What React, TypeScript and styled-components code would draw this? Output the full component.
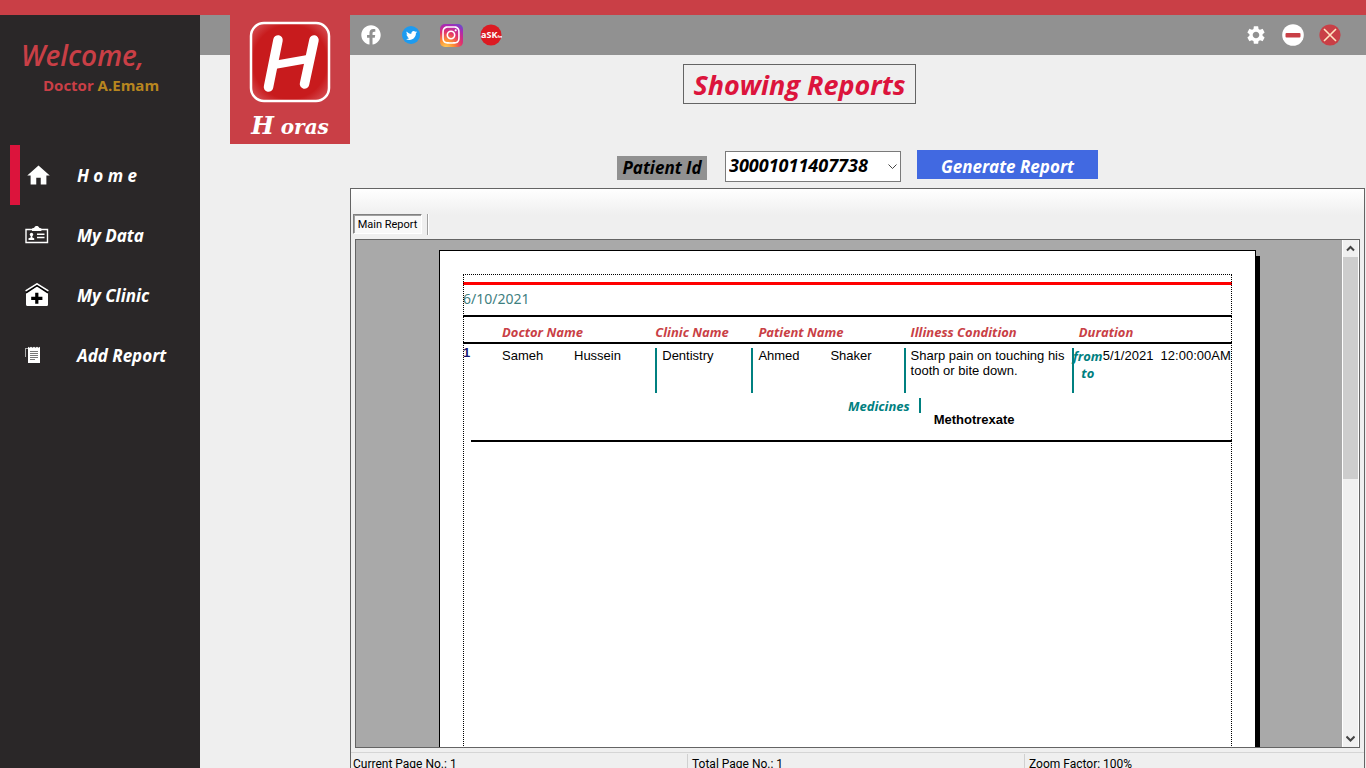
import React from "react";
import styled, { createGlobalStyle } from "styled-components";
import { FaFacebook, FaTwitter, FaInstagram } from "react-icons/fa";
import { MdHome, MdSettings } from "react-icons/md";

const brand = "#c93f46";
const hand = `"Comic Sans MS", "Open Sans", sans-serif`;
const ui = `Tahoma, Roboto, sans-serif`;

const GlobalStyle = createGlobalStyle`
  * { box-sizing: border-box; }
  body { margin: 0; background: #efefef; }
  button { border: 0; padding: 0; background: none; font: inherit; color: inherit; cursor: pointer; }
  svg { display: block; flex: none; }
`;

const Page = styled.div`
  display: flex;
  flex-direction: column;
  height: 100vh;
  overflow: hidden;
  font-family: ${hand};
`;

const TopStripe = styled.div`
  flex: none;
  height: 15px;
  background: ${brand};
`;

const Body = styled.div`
  flex: 1;
  min-height: 0;
  display: flex;
`;

const Sidebar = styled.aside`
  flex: none;
  width: 200px;
  background: #2a2728;
`;

const Greeting = styled.div`
  height: 130px;
  padding: 22px 0 0 21px;
  color: ${brand};
`;

const Welcome = styled.div`
  font-size: 28px;
  line-height: 36px;
  font-style: italic;
  font-weight: 600;
`;

const UserName = styled.div`
  padding-left: 22px;
  font-size: 15px;
  line-height: 24px;
  font-weight: 700;

  span { color: #b8861f; }
`;

const MenuItem = styled.button<{ $active?: boolean }>`
  display: flex;
  align-items: center;
  width: 190px;
  height: 60px;
  margin-left: 10px;
  border-left: 10px solid ${(p) => (p.$active ? "#dc143c" : "transparent")};
  color: #fff;
  font-size: 17px;
  font-style: italic;
  font-weight: 700;
`;

const MenuIcon = styled.span`
  width: 57px;
  padding-left: 5px;
`;

const Main = styled.main`
  flex: 1;
  min-width: 0;
  display: flex;
  flex-direction: column;
  background: #efefef;
`;

const Header = styled.header`
  flex: none;
  display: flex;
  align-items: flex-start;
  height: 40px;
  padding: 0 18px 0 30px;
  background: #919191;
`;

const LogoCard = styled.div`
  flex: none;
  display: flex;
  flex-direction: column;
  align-items: center;
  width: 120px;
  height: 129px;
  padding-top: 6px;
  background: ${brand};
`;

const LogoName = styled.div`
  margin-top: 5px;
  color: #fff;
  font: italic 700 20px/36px "DejaVu Serif", serif;

  b { font-size: 24px; }
`;

const IconRow = styled.div<{ $cell: number }>`
  display: grid;
  grid-auto-flow: column;
  grid-auto-columns: ${(p) => p.$cell}px;
  align-items: center;
  justify-items: center;
  height: 40px;
  margin-left: 1px;
  color: #fff;
`;

const Spacer = styled.div`
  flex: 1;
`;

const Disc = styled.span`
  display: grid;
  place-items: center;
  width: 18px;
  height: 18px;
  border-radius: 50%;
  background: #1d9bf0;
`;

const InstaTile = styled.span`
  display: grid;
  place-items: center;
  width: 23px;
  height: 23px;
  border-radius: 5px;
  background: radial-gradient(circle at 25% 105%, #ffd25a 0, #fd8d32 28%, #e1306c 55%, #a92bb5 78%, #4c5bd4 100%);
`;

const Content = styled.section`
  flex: 1;
  min-height: 0;
  display: flex;
  flex-direction: column;
  padding: 9px 1px 0 150px;
`;

const TitleRow = styled.div`
  display: flex;
  justify-content: center;
  padding-right: 116px;
`;

const Title = styled.h1`
  width: 233px;
  height: 40px;
  margin: 0;
  border: 1px solid #646464;
  color: #dc143c;
  font-size: 27px;
  line-height: 40px;
  font-style: italic;
  text-align: center;
  white-space: nowrap;
`;

const Form = styled.form`
  display: flex;
  align-items: center;
  justify-content: center;
  height: 38px;
  margin: 43px 0 3px;
  font-size: 17px;
  font-style: italic;
  font-weight: 700;
`;

const FieldLabel = styled.label`
  width: 90px;
  height: 24px;
  margin: 4px 18px 0 0;
  background: #919191;
  line-height: 24px;
  text-align: center;
`;

const SelectBox = styled.div`
  display: grid;
  align-items: center;
  width: 176px;
  height: 31px;
  margin-right: 16px;

  > * { grid-area: 1 / 1; }
  svg { justify-self: end; margin-right: 4px; pointer-events: none; }
`;

const Select = styled.select`
  appearance: none;
  width: 100%;
  height: 100%;
  padding: 0 20px 2px 3px;
  border: 1px solid #7a7a7a;
  border-radius: 0;
  background: #fff;
  color: #000;
  font: inherit;
  font-size: 18px;
`;

const Generate = styled.button`
  width: 181px;
  height: 29px;
  margin-bottom: 4px;
  background: #4169e1;
  color: #fff;
  line-height: 29px;
  padding-top: 2px;
`;

const Viewer = styled.div`
  flex: 1;
  min-height: 0;
  display: flex;
  flex-direction: column;
  border: 1px solid #646464;
  border-bottom: 0;
  background: linear-gradient(#fff, #efefef 26px);
  font-family: ${ui};
`;

const Tabs = styled.div`
  flex: none;
  display: flex;
  height: 50px;
  padding: 25px 0 4px 2px;
`;

const Tab = styled.button`
  width: 69px;
  height: 20px;
  padding-top: 1px;
  border: 1px solid;
  border-color: #808080 #fff #fff #808080;
  box-shadow: inset 1px 1px #a0a0a0;
  background: #f8f8f8;
  color: #000;
  font-size: 11px;
  line-height: 18px;
`;

const TabRule = styled.div`
  width: 2px;
  height: 21px;
  margin-left: 5px;
  border-left: 1px solid #a0a0a0;
  border-right: 1px solid #fff;
`;

const Pane = styled.div`
  flex: 1;
  min-height: 0;
  display: flex;
  margin: 0 4px;
  border: 1px solid #646464;
  background: #a9a9a9;
`;

const Desk = styled.div`
  flex: 1;
  min-width: 0;
  display: flex;
  justify-content: center;
  padding: 10px 3px 0 0;
  overflow: hidden;
`;

const Paper = styled.article`
  flex: none;
  width: 817px;
  height: 1056px;
  padding: 23px;
  border: 1px solid #000;
  background: #fff;
  box-shadow: 4px 6px 0 #000;
`;

const PrintArea = styled.div`
  height: 100%;
  padding-top: 8px;
  outline: 1px dotted #000;
  outline-offset: -1px;
`;

const DateLine = styled.div`
  height: 35px;
  border-top: 3px solid #f00;
  border-bottom: 2px solid #000;
  color: #3f8080;
  font: 14px/28px "Noto Sans", sans-serif;
`;

const Table = styled.table`
  width: 100%;
  table-layout: fixed;
  border-collapse: collapse;
  font: 13px/15px "Liberation Sans", Arial, sans-serif;

  td { padding: 0; vertical-align: top; }
`;

const Th = styled.th<{ $pad: number }>`
  height: 26px;
  padding: 4px 0 0 ${(p) => p.$pad}px;
  border-bottom: 2px solid #000;
  color: ${brand};
  font: italic 700 13px/18px ${hand};
  text-align: left;
  white-space: nowrap;
`;

const Cell = styled.div`
  display: flex;
  height: 45px;
  margin-top: 4px;
  padding-left: 5px;
  border-left: 2px solid #008080;
  white-space: nowrap;
`;

const FirstCell = styled(Cell)`
  padding-left: 0;
  border-left: 0;
`;

const Word = styled.span`
  width: 72px;
`;

const RowNumber = styled.b`
  width: 39px;
  color: #191970;
  line-height: 9px;
`;

const Teal = styled.span`
  color: #008080;
  font: italic 700 13px/17px ${hand};
`;

const Period = styled.div`
  width: 30px;
  margin-left: -6px;
  text-align: center;
`;

const Medicines = styled.div`
  display: flex;
  height: 49px;
  margin-left: 8px;
  padding: 5px 0 0 377px;
  border-bottom: 2px solid #000;
`;

const MedicineBar = styled.span`
  width: 2px;
  height: 15px;
  margin: 0 13px 0 9px;
  background: #008080;
`;

const Medicine = styled.b`
  padding-top: 14px;
`;

const Scrollbar = styled.div`
  flex: none;
  display: flex;
  flex-direction: column;
  width: 17px;
  border: solid #fff;
  border-width: 0 1px;
  background: #f0f0f0;
`;

const Arrow = styled.button`
  flex: none;
  display: grid;
  place-items: center;
  height: 17px;
`;

const Thumb = styled.div`
  height: 222px;
  background: #cdcdcd;
`;

const Status = styled.footer`
  flex: none;
  display: grid;
  grid-template-columns: 336px 337px 1fr;
  height: 16px;
  margin-top: 4px;
  border-top: 1px solid #d5d5d5;
  overflow: hidden;
  font-size: 12px;
  line-height: 20px;

  span { margin-top: 1px; padding-left: 2px; }
  span + span { padding-left: 4px; border-left: 1px solid #d0d0d0; }
`;

const CardIcon = () => (
  <svg width="24" height="18" viewBox="0 0 24 18" fill="#fff">
    <path d="M1 3.5h21.500v13H1z" fill="none" stroke="#fff" strokeWidth="1.400" />
    <path d="M7 5V2.600l2.200-.8C9.600.6 10.500 0 11.700 0s2.100.6 2.500 1.800l2.200.8V5z" />
    <circle cx="6.500" cy="8.500" r="1.700" />
    <path d="M5.700 9h1.600v2.500l1.900.8V14H3.500v-1.700l2.200-.8zM12 7.500h7.500v1.600H12zm0 3.200h7.500v1.600H12z" />
  </svg>
);

const ClinicIcon = () => (
  <svg width="24" height="24" viewBox="0 0 24 24">
    <path d="M1 10 12 3l11 7v11.500c0 1-.8 1.500-1.500 1.500h-19C1.500 23 1 22.300 1 21.500z" fill="#fff" />
    <path d="M1 9.800 12 2.700l11 7.100" fill="none" stroke="#000" strokeWidth="1.600" />
    <path d="M.6 7.900 12 .8l11.400 7.100" fill="none" stroke="#fff" strokeWidth="1.500" />
    <path d="M10.200 9.800h3.200v4h4V17h-4v3.800h-3.200V17h-4v-3.200h4z" fill="#000" />
  </svg>
);

const ReportIcon = () => (
  <svg width="16" height="18" viewBox="0 0 16 18">
    <path d="M3 2.200V.8l1.500 1L6 .8l1.500 1L9 .8l1.500 1L12 .8l1.500 1L15 .8V17H3z" fill="#fff" />
    <path d="M.5 2v9M.5 2.500H3" fill="none" stroke="#aaa" />
    <path d="M5 5.500h8M5 7.500h8M5 9.500h8M5 11.500h8M5 13.500h5" stroke="#555" strokeWidth=".8" />
  </svg>
);

const HorasMark = () => (
  <svg width="82" height="82" viewBox="0 0 82 82" role="img" aria-label="Horas logo">
    <defs>
      <radialGradient id="glow" cx="50%" cy="50%" r="68%">
        <stop offset="70%" stopColor="#c81b1d" />
        <stop offset="100%" stopColor="#d85a60" />
      </radialGradient>
    </defs>
    <rect x="2" y="2" width="78" height="78" rx="13" fill="url(#glow)" stroke="#fff" strokeWidth="2.500" />
    <g stroke="#fff" strokeLinecap="round">
      <line x1="29" y1="19" x2="19.500" y2="66" strokeWidth="9.500" />
      <line x1="65" y1="19" x2="55.500" y2="63" strokeWidth="9.500" />
      <line x1="25" y1="44" x2="59" y2="38" strokeWidth="8" />
    </g>
  </svg>
);

const AskIcon = () => (
  <svg width="22" height="22" viewBox="0 0 22 22">
    <circle cx="11" cy="11" r="10.500" fill="#dc1a22" />
    <text x="1" y="14" fill="#fff" fontFamily="Open Sans, sans-serif" fontSize="9" fontWeight="700">
      aSK<tspan fontSize="4">fm</tspan>
    </text>
  </svg>
);

const MinimizeIcon = () => (
  <svg width="22" height="22" viewBox="0 0 22 22">
    <circle cx="11" cy="11" r="10.800" fill="#fff" />
    <rect x="3.500" y="9" width="15" height="4.500" rx="1" fill={brand} />
  </svg>
);

const CloseIcon = () => (
  <svg width="22" height="22" viewBox="0 0 22 22">
    <circle cx="11" cy="11" r="10.600" fill={brand} />
    <path d="m5 5 12 12M17 5 5 17" stroke="#ffe3c0" strokeWidth="1.600" />
  </svg>
);

const Chevron = ({ up, weight = 2 }: { up?: boolean; weight?: number }) => (
  <svg width="9" height="9" viewBox="0 0 9 9" fill="none" stroke="#444" strokeWidth={weight}>
    <path d={up ? "M1 6.500 4.500 3 8 6.500" : "M.5 2.500 4.500 6.500 8.500 2.500"} />
  </svg>
);

const menu = [
  { label: "H o m e", icon: <MdHome size={27} />, active: true },
  { label: "My Data", icon: <CardIcon /> },
  { label: "My Clinic", icon: <ClinicIcon /> },
  { label: "Add Report", icon: <ReportIcon /> },
];

const columns = [
  { name: "Doctor Name", width: 192, pad: 39 },
  { name: "Clinic Name", width: 96, pad: 0 },
  { name: "Patient Name", width: 152, pad: 7 },
  { name: "Illiness Condition", width: 168, pad: 7 },
  { name: "Duration", width: 160, pad: 7 },
];

export default function App() {
  return (
    <Page>
      <GlobalStyle />
      <TopStripe />
      <Body>
        <Sidebar>
          <Greeting>
            <Welcome>Welcome,</Welcome>
            <UserName>Doctor <span>A.Emam</span></UserName>
          </Greeting>
          <nav>
            {menu.map((m) => (
              <MenuItem key={m.label} $active={m.active}>
                <MenuIcon>{m.icon}</MenuIcon>
                {m.label}
              </MenuItem>
            ))}
          </nav>
        </Sidebar>
        <Main>
          <Header>
            <LogoCard>
              <HorasMark />
              <LogoName><b>H</b> oras</LogoName>
            </LogoCard>
            <IconRow $cell={40}>
              <button aria-label="Facebook"><FaFacebook size={20} /></button>
              <button aria-label="Twitter"><Disc><FaTwitter size={11} /></Disc></button>
              <button aria-label="Instagram"><InstaTile><FaInstagram size={20} /></InstaTile></button>
              <button aria-label="Ask.fm"><AskIcon /></button>
            </IconRow>
            <Spacer />
            <IconRow $cell={37}>
              <button aria-label="Settings"><MdSettings size={22} /></button>
              <button aria-label="Minimize"><MinimizeIcon /></button>
              <button aria-label="Close"><CloseIcon /></button>
            </IconRow>
          </Header>
          <Content>
            <TitleRow>
              <Title>Showing Reports</Title>
            </TitleRow>
            <Form onSubmit={(e) => e.preventDefault()}>
              <FieldLabel htmlFor="patient">Patient Id</FieldLabel>
              <SelectBox>
                <Select id="patient">
                  <option>30001011407738</option>
                </Select>
                <Chevron weight={1} />
              </SelectBox>
              <Generate>Generate Report</Generate>
            </Form>
            <Viewer>
              <Tabs>
                <Tab>Main Report</Tab>
                <TabRule />
              </Tabs>
              <Pane>
                <Desk>
                  <Paper>
                    <PrintArea>
                      <DateLine>6/10/2021</DateLine>
                      <Table>
                        <colgroup>
                          {columns.map((c) => <col key={c.name} width={c.width} />)}
                        </colgroup>
                        <thead>
                          <tr>
                            {columns.map((c) => <Th key={c.name} $pad={c.pad}>{c.name}</Th>)}
                          </tr>
                        </thead>
                        <tbody>
                          <tr>
                            <td>
                              <FirstCell>
                                <RowNumber>1</RowNumber>
                                <Word>Sameh</Word>
                                <Word>Hussein</Word>
                              </FirstCell>
                            </td>
                            <td><Cell>Dentistry</Cell></td>
                            <td>
                              <Cell>
                                <Word>Ahmed</Word>
                                <Word>Shaker</Word>
                              </Cell>
                            </td>
                            <td>
                              <Cell>
                                <span>Sharp pain on touching his<br />tooth or bite down.</span>
                              </Cell>
                            </td>
                            <td>
                              <Cell>
                                <Period><Teal>from</Teal><br /><Teal>to</Teal></Period>
                                <span>5/1/2021&nbsp; 12:00:00AM</span>
                              </Cell>
                            </td>
                          </tr>
                          <tr>
                            <td colSpan={5}>
                              <Medicines>
                                <Teal>Medicines</Teal>
                                <MedicineBar />
                                <Medicine>Methotrexate</Medicine>
                              </Medicines>
                            </td>
                          </tr>
                        </tbody>
                      </Table>
                    </PrintArea>
                  </Paper>
                </Desk>
                <Scrollbar>
                  <Arrow aria-label="Scroll up"><Chevron up /></Arrow>
                  <Thumb />
                  <Spacer />
                  <Arrow aria-label="Scroll down"><Chevron /></Arrow>
                </Scrollbar>
              </Pane>
              <Status>
                <span>Current Page No.: 1</span>
                <span>Total Page No.: 1</span>
                <span>Zoom Factor: 100%</span>
              </Status>
            </Viewer>
          </Content>
        </Main>
      </Body>
    </Page>
  );
}
